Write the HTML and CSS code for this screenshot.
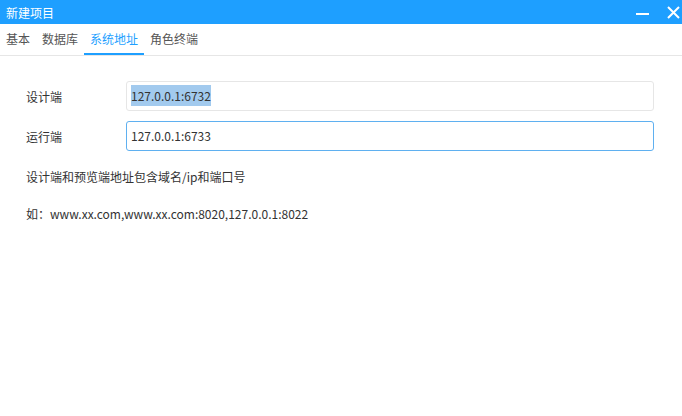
FILE: index.html
```html
<!DOCTYPE html>
<html lang="zh-CN">
  <head>
    <meta charset="UTF-8" />
    <title>新建项目</title>
    <link rel="stylesheet" href="styles.css">
  </head>
  <body>
    <div class="dialog">
      <!-- Title bar -->
      <div class="title-bar">
        <span class="title">新建项目</span>
        <div class="title-actions">
          <span class="btn-min"></span>
          <svg class="btn-close" width="13" height="13" viewBox="0 0 13 13">
            <path d="M1 1 L12 12 M12 1 L1 12" stroke="#fff" stroke-width="2" />
          </svg>
        </div>
      </div>

      <!-- Tabs -->
      <div class="tabs">
        <div class="tab">基本</div>
        <div class="tab">数据库</div>
        <div class="tab active">系统地址</div>
        <div class="tab">角色终端</div>
      </div>

      <!-- Form -->
      <div class="content">
        <div class="form-row">
          <label class="form-label">设计端</label>
          <div class="input"><span class="selected">127.0.0.1:6732</span></div>
        </div>
        <div class="form-row">
          <label class="form-label">运行端</label>
          <div class="input focus">127.0.0.1:6733</div>
        </div>
        <p class="tip">设计端和预览端地址包含域名/ip和端口号</p>
        <p class="tip example">如：www.xx.com,www.xx.com:8020,127.0.0.1:8022</p>
      </div>
    </div>
  </body>
</html>
```

FILE: styles.css
```css
body,
html {
  margin: 0;
  padding: 0;
  width: 100%;
  height: 100%;
  background: #ffffff;
  font-family: "Noto Sans CJK SC", "Noto Sans", sans-serif;
  font-size: 12px;
  color: #333;
}

/* Title bar */
.title-bar {
  background-color: #1e9fff;
  height: 24px;
  display: flex;
  align-items: center;
  justify-content: space-between;
  padding: 0 2px 0 6px;
}

.title {
  color: #fff;
  font-size: 12px;
}

.title-actions {
  display: flex;
  align-items: center;
  gap: 18px;
}

.btn-min {
  width: 13px;
  height: 2px;
  background: #fff;
  margin-top: 4px;
}

/* Tabs */
.tabs {
  display: flex;
  height: 31px;
  border-bottom: 1px solid #e6e6e6;
}

.tab {
  padding: 0 6px;
  line-height: 30px;
  color: #555;
  font-size: 12px;
  cursor: pointer;
}

.tab.active {
  color: #1e9fff;
  border-bottom: 2px solid #1e9fff;
  line-height: 29px;
}

/* Form */
.content {
  padding: 25px 28px 0 26px;
}

.form-row {
  display: flex;
  align-items: center;
  margin-bottom: 10px;
}

.form-label {
  width: 100px;
  color: #333;
}

.input {
  flex: 1;
  height: 28px;
  line-height: 28px;
  border: 1px solid #e6e6e6;
  border-radius: 3px;
  padding: 0 4px;
  color: #333;
  font-size: 12px;
}

.input.focus {
  border-color: #5fb0f0;
}

.selected {
  background: #a2caee;
  padding: 2px 0;
}

.tip {
  margin: 17px 0 0;
  color: #333;
}

.tip.example {
  margin-top: 20px;
}
```
